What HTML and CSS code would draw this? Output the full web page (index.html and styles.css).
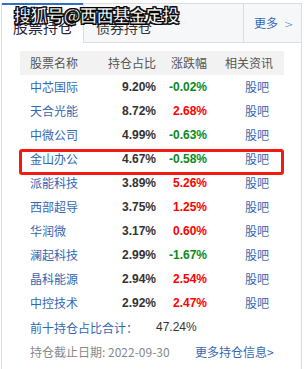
FILE: index.html
```html
<!DOCTYPE html>
<html>
<head>
<meta charset="utf-8">
<link rel="stylesheet" href="styles.css">
</head>
<body>
<div class="widget">
  <div class="tabs">
    <div class="tab active">股票持仓</div>
    <div class="tab second">债券持仓</div>
    <div class="tab more">更多<span class="chev">&gt;</span></div>
  </div>
  <div class="table">
    <div class="row head">
      <div class="c1">股票名称</div>
      <div class="c2">持仓占比</div>
      <div class="c3">涨跌幅</div>
      <div class="c4">相关资讯</div>
    </div>
    <div class="row"><div class="c1 name">中芯国际</div><div class="c2 num">9.20%</div><div class="c3 num down">-0.02%</div><div class="c4 link">股吧</div></div>
    <div class="row"><div class="c1 name">天合光能</div><div class="c2 num">8.72%</div><div class="c3 num up">2.68%</div><div class="c4 link">股吧</div></div>
    <div class="row"><div class="c1 name">中微公司</div><div class="c2 num">4.99%</div><div class="c3 num down">-0.63%</div><div class="c4 link">股吧</div></div>
    <div class="row"><div class="c1 name">金山办公</div><div class="c2 num">4.67%</div><div class="c3 num down">-0.58%</div><div class="c4 link">股吧</div></div>
    <div class="row"><div class="c1 name">派能科技</div><div class="c2 num">3.89%</div><div class="c3 num up">5.26%</div><div class="c4 link">股吧</div></div>
    <div class="row"><div class="c1 name">西部超导</div><div class="c2 num">3.75%</div><div class="c3 num up">1.25%</div><div class="c4 link">股吧</div></div>
    <div class="row"><div class="c1 name">华润微</div><div class="c2 num">3.17%</div><div class="c3 num up">0.60%</div><div class="c4 link">股吧</div></div>
    <div class="row"><div class="c1 name">澜起科技</div><div class="c2 num">2.99%</div><div class="c3 num down">-1.67%</div><div class="c4 link">股吧</div></div>
    <div class="row"><div class="c1 name">晶科能源</div><div class="c2 num">2.94%</div><div class="c3 num up">2.54%</div><div class="c4 link">股吧</div></div>
    <div class="row"><div class="c1 name">中控技术</div><div class="c2 num">2.92%</div><div class="c3 num up">2.47%</div><div class="c4 link">股吧</div></div>
    <div class="foot">
      <span class="foot-label">前十持仓占比合计：</span><span class="foot-val">47.24%</span>
    </div>
    <div class="foot">
      <span class="date">持仓截止日期: 2022-09-30</span><span class="more-info">更多持仓信息&gt;</span>
    </div>
    <div class="highlight"></div>
  </div>
  <div class="watermark">搜狐号@西西基金定投</div>
</div>
</body>
</html>
```
FILE: styles.css
```css
html, body {
  margin: 0;
  padding: 0;
  background: #fff;
}
body {
  font-family: "Noto Sans CJK SC", "Liberation Sans", sans-serif;
  font-size: 12px;
  color: #333;
}
.widget {
  position: relative;
  margin: 3px 0 0 1px;
  width: 299px;
  height: 366px;
  border-left: 1px solid #dcdcdc;
  border-right: 1px solid #dcdcdc;
}
.tabs {
  display: flex;
  height: 40px;
}
.tab {
  box-sizing: border-box;
  height: 40px;
  border-top: 1px solid #dcdcdc;
  border-bottom: 1px solid #dcdcdc;
  background: #f6f7f9;
  font-size: 14px;
  line-height: 14px;
  padding-top: 16px;
}
.tab.active {
  width: 81px;
  background: #fff;
  border-top: 2px solid #2f6fc6;
  border-bottom: 1px solid #fff;
  padding-left: 11px;
  padding-top: 15px;
  font-size: 15px;
  color: #2a2040;
}
.tab.second {
  flex: 1;
  border-left: 1px solid #dcdcdc;
  padding-left: 12px;
  color: #333;
}
.tab.more {
  width: 58px;
  border-left: 1px solid #dcdcdc;
  color: #3467b9;
  font-size: 12px;
  line-height: 12px;
  padding-top: 13px;
  padding-left: 10px;
}
.chev {
  margin-left: 6px;
  font-family: "DejaVu Sans", sans-serif;
  font-size: 11px;
  font-weight: 300;
}
.table {
  position: relative;
  margin: 8px 17px 0 18px;
}
.row {
  display: grid;
  grid-template-columns: 80px 56px 51px 1fr;
  height: 24px;
  align-items: center;
  line-height: 14px;
}
.row.head {
  background: #f2f2f2;
  color: #555;
}
.c1 {
  padding-left: 10px;
}
.c2, .c3 {
  text-align: right;
}
.head .c4 {
  padding-left: 18px;
}
.name, .link {
  color: #3467b3;
}
.link {
  padding-left: 38px;
}
.num {
  font-family: "Liberation Sans", Arial, sans-serif;
  font-weight: bold;
  font-size: 12px;
}
.c2.num {
  color: #333;
}
.down {
  color: #0a8a1a;
}
.up {
  color: #ff0000;
}
.foot {
  display: flex;
  height: 24px;
  align-items: center;
  padding-left: 10px;
}
.foot-label {
  color: #3467b3;
  width: 126px;
}
.foot-val {
  font-family: "Liberation Sans", Arial, sans-serif;
  color: #333;
}
.date {
  color: #888;
  width: 165px;
}
.more-info {
  color: #3467b3;
}
.highlight {
  position: absolute;
  left: -1px;
  top: 98px;
  width: 259px;
  height: 20px;
  border: 3px solid #f41a12;
  border-radius: 3px;
}
.watermark {
  position: absolute;
  left: 12px;
  top: 2px;
  font-size: 17px;
  line-height: 20px;
  font-weight: bold;
  color: #fff;
  -webkit-text-stroke: 0.6px #000;
  text-shadow: 1px 1px 0 #000, -1px -1px 0 #000, 1px -1px 0 #000, -1px 1px 0 #000;
  letter-spacing: -0.5px;
}
```
